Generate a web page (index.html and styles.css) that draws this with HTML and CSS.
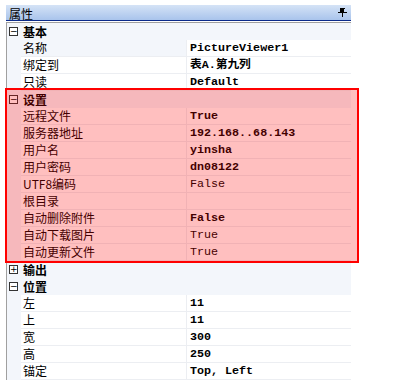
FILE: index.html
```html
<!DOCTYPE html>
<html lang="zh-CN">
<head>
    <meta charset="UTF-8">
    <title>属性</title>
    <link rel="stylesheet" href="styles.css">
</head>
<body>
    <div class="panel">
        <div class="titlebar">
            <span>属性</span>
            <svg class="pin" width="9" height="9" viewBox="0 0 9 9">
                <path d="M2 0.5H7M2.5 0.5V4M5.5 0.5V4M0 4.5H9M4.5 4.5V9" stroke="#000" stroke-width="1" fill="none"/>
                <rect x="3" y="1" width="2" height="3" fill="#000"/>
            </svg>
        </div>
        <div class="grid">
            <div class="group"><span class="box">−</span>基本</div>
            <div class="row"><div class="name shade">名称</div><div class="value b">PictureViewer1</div></div>
            <div class="row"><div class="name">绑定到</div><div class="value b">表A.第九列</div></div>
            <div class="row"><div class="name">只读</div><div class="value b">Default</div></div>

            <div class="group"><span class="box">−</span>设置</div>
            <div class="row"><div class="name">远程文件</div><div class="value b">True</div></div>
            <div class="row"><div class="name">服务器地址</div><div class="value b">192.168..68.143</div></div>
            <div class="row"><div class="name">用户名</div><div class="value b">yinsha</div></div>
            <div class="row"><div class="name">用户密码</div><div class="value b">dn08122</div></div>
            <div class="row"><div class="name">UTF8编码</div><div class="value">False</div></div>
            <div class="row"><div class="name">根目录</div><div class="value"></div></div>
            <div class="row"><div class="name">自动删除附件</div><div class="value b">False</div></div>
            <div class="row"><div class="name">自动下载图片</div><div class="value">True</div></div>
            <div class="row"><div class="name">自动更新文件</div><div class="value">True</div></div>

            <div class="group"><span class="box">+</span>输出</div>

            <div class="group"><span class="box">−</span>位置</div>
            <div class="row"><div class="name">左</div><div class="value b">11</div></div>
            <div class="row"><div class="name">上</div><div class="value b">11</div></div>
            <div class="row"><div class="name">宽</div><div class="value b">300</div></div>
            <div class="row"><div class="name">高</div><div class="value b">250</div></div>
            <div class="row"><div class="name">锚定</div><div class="value b">Top, Left</div></div>
        </div>
    </div>
    <!-- 标注框 -->
    <div class="mark"></div>
</body>
</html>
```

FILE: styles.css
```css
body {
    margin: 0;
    background: #fff;
    font-family: "Noto Sans CJK SC", sans-serif;
    font-size: 12px;
    color: #000;
    height: 382px;
    overflow: hidden;
}
.panel {
    margin: 5px 0 0 6px;
    width: 345px;
}
.titlebar {
    height: 15px;
    display: flex;
    align-items: center;
    justify-content: space-between;
    padding: 0 4px 0 3px;
    background: linear-gradient(#d5e3f6, #a9c4ec);
    border-bottom: 1px solid #0a2a8a;
    line-height: 15px;
    font-size: 12px;
}
.titlebar span {
    margin-top: 1px;
}
.pin {
    display: block;
}
.grid {
    margin-top: 1px;
    border-top: 1px solid #a0a0a0;
    border-left: 1px solid #a0a0a0;
    background: #f3f6fb;
}
.group {
    height: 17px;
    line-height: 16px;
    display: flex;
    align-items: center;
    font-weight: bold;
    font-size: 12px;
}
.box {
    width: 7px;
    height: 7px;
    border: 1px solid #333;
    margin: 0 5px 0 2px;
    font-size: 9px;
    line-height: 7px;
    text-align: center;
    font-weight: normal;
    font-family: "DejaVu Sans", sans-serif;
    background: #fff;
}
.row {
    height: 17px;
    display: flex;
    padding-left: 14px;
}
.name, .value {
    height: 16px;
    line-height: 16px;
    border-bottom: 1px solid #eceef2;
    background: #fff;
}
.name {
    width: 163px;
    padding-left: 2px;
    border-right: 1px solid #eceef2;
}
.name.shade {
    background: #f3f6fb;
}
.value {
    flex: 1;
    padding-left: 3px;
    font-family: "Liberation Mono", "Noto Sans CJK SC", monospace;
    font-size: 11.7px;
    color: #000;
}
.value.b {
    font-weight: bold;
}
.mark {
    position: absolute;
    left: 5px;
    top: 88px;
    width: 350px;
    height: 171px;
    border: 2px solid #ff0000;
    background: rgba(255, 0, 0, 0.25);
}
```
